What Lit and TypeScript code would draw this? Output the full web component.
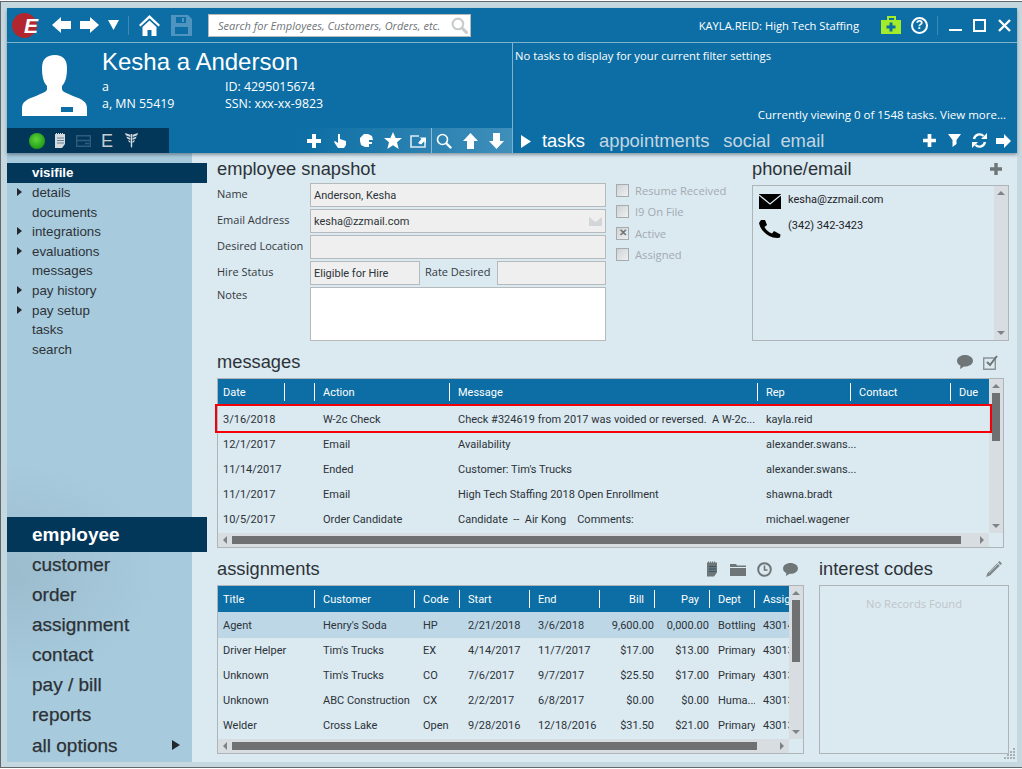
import { LitElement, html, css, svg } from "lit";
import { customElement } from "lit/decorators.js";

const W = "#ffffff";
const ico = (w: number, h: number, vb: string, body: unknown, cls = "") =>
  html`<svg class="ico ${cls}" width=${w} height=${h} viewBox=${vb}>${body}</svg>`;

const plus = (s = 14, c = W) => ico(s, s, "0 0 14 14", svg`<path fill=${c} d="M5 0h4v5h5v4H9v5H5V9H0V5h5z"/>`);
const back = ico(19, 18, "0 0 19 18", svg`<path fill=${W} d="M0 9l9-8v4h10v8H9v4z"/>`);
const fwd = ico(19, 18, "0 0 19 18", svg`<path fill=${W} d="M19 9l-9-8v4H0v8h10v4z"/>`);
const down = ico(11, 10, "0 0 11 10", svg`<path fill=${W} d="M0 0h11L5.5 10z"/>`);
const home = ico(21, 21, "0 0 21 21", svg`<path fill=${W} d="M10.5 0L21 10l-1.5 1.6-9-8.4-9 8.4L0 10zM10.5 5.5l7 6.5v9h-5v-6h-4v6h-5v-9z"/>`);
const save = ico(21, 21, "0 0 21 21", svg`<path fill="#4f94bf" fill-rule="evenodd" d="M0 0h17l4 4v17H0zM5 2v6h10V2zM4 12v7h13v-7z"/><path fill="#4f94bf" d="M11 3h2v4h-2z"/>`);
const magnify = (s: number, c: string, sw = 2) => ico(s, s, "0 0 16 16", svg`<circle cx="6.5" cy="6.5" r="5" fill="none" stroke=${c} stroke-width=${sw}/><path stroke=${c} stroke-width=${sw + 0.8} stroke-linecap="round" d="M10.5 10.5l4 4"/>`);
const kit = ico(20, 18, "0 0 20 18", svg`<path fill="#a4ec27" d="M0 4h6V0h9v4h5v14H0zM8 2v2h5V2z" fill-rule="evenodd"/><path fill="#0c6ea4" d="M8.5 6.5h3v3h3v3h-3v3h-3v-3h-3v-3h3z"/>`);
const help = html`<span class="help">?</span>`;
const minimize = ico(13, 14, "0 0 13 14", svg`<path fill=${W} d="M0 11h13v2H0z"/>`);
const maximize = ico(13, 13, "0 0 13 13", svg`<path fill="none" stroke=${W} stroke-width="2" d="M1 1h11v11H1z"/>`);
const closeX = ico(13, 13, "0 0 13 13", svg`<path stroke=${W} stroke-width="2.4" d="M1 1l11 11M12 1L1 12"/>`);
const avatar = ico(65, 61, "0 0 65 61", svg`<path fill=${W} d="M33 0C24 0 20 5 20 13C20 20 21 27 25 31L25 34C25 37 20 38 14 41C5 44 0 47 0 53L0 61L65 61L65 53C65 47 60 44 51 41C45 38 40 37 40 34L40 31C44 27 45 20 45 13C45 5 41 0 33 0Z"/><rect x="39" y="52" width="12" height="5" fill="#0c6ea4"/>`);
const dot = html`<span class="dot"></span>`;
const note = (c: string, w = 11, h = 15) => ico(w, h, "0 0 11 15", svg`<path fill=${c} d="M0 1h1V0h1v1h1V0h1v1h1V0h1v1h1V0h1v1h2v10l-3 4H0z"/><path stroke="#0b3f60" stroke-width="1" opacity=".55" d="M2 5h7M2 7.5h7M2 10h7"/>`);
const card = ico(15, 12, "0 0 15 12", svg`<path fill="none" stroke="#2f5d7c" stroke-width="1.4" d="M.7.7h13.6v10.6H.7z"/><path stroke="#2f5d7c" stroke-width="1.4" d="M1 5.5h13M9 8.5h4"/>`);
const caduceus = ico(13, 15, "0 0 13 15", svg`<path fill="#d5dadd" d="M0 0l5.300 1.800V4L.8 2.200zM13 0L7.700 1.800V4l4.500-1.800zM1.300 3.500L5.300 5v2L2.200 5.600zM11.700 3.500L7.700 5v2l3.100-1.400zM3 7l2.300 1v2L3.800 8.800zM10 7L7.700 8v2l1.500-1.200zM5.800 1h1.400v12.500L6.500 15l-.7-1.500z"/>`);
const hand = ico(12, 14, "0 0 12 14", svg`<path fill=${W} d="M4 0h2v5l6 2v4l-2 3H4L0 8l1-1 3 2z"/>`);
const puzzle = ico(13, 13, "0 0 13 13", svg`<path fill=${W} d="M4 0h4l4 2 1 4H9v2h3v2H9v3H5L1 11 0 7V4z"/>`);
const star = ico(18, 17, "0 0 18 17", svg`<path fill=${W} d="M9 0l2.600 6H18l-5 4.300L14.700 17 9 13.300 3.300 17 5 10.300 0 6h6.400z"/>`);
const exportI = ico(16, 14, "0 0 16 14", svg`<path fill="none" stroke=${W} stroke-width="1.600" opacity=".85" d="M9 2H1v11h14V8"/><path fill=${W} d="M8 9l3.500-4-2-1.500H16v5.500l-2-1.500-3 3z"/>`);
const up = ico(15, 16, "0 0 15 16", svg`<path fill=${W} d="M7.500 0L15 8h-4v8H4V8H0z"/>`);
const dn = ico(15, 16, "0 0 15 16", svg`<path fill=${W} d="M7.500 16L15 8h-4V0H4v8H0z"/>`);
const play = ico(10, 13, "0 0 10 13", svg`<path fill=${W} d="M0 0l10 6.500L0 13z"/>`);
const filter = ico(13, 13, "0 0 13 13", svg`<path fill=${W} d="M0 0h13L8.500 6v4l-4 3V6z"/>`);
const refresh = ico(15, 15, "0 0 15 15", svg`<path fill="none" stroke=${W} stroke-width="2.400" d="M2 6a5.700 5.700 0 0 1 9.500-3M13 9a5.700 5.700 0 0 1-9.500 3"/><path fill=${W} d="M15 0v6H9zM0 15V9h6z"/>`);
const arrowR = ico(15, 14, "0 0 15 14", svg`<path fill=${W} d="M15 7L8 0v4H0v6h8v4z"/>`);
const G = "#6e7678";
const chat = (w = 16, h = 14) => ico(w, h, "0 0 16 14", svg`<path fill=${G} d="M8 0c4.400 0 8 2.500 8 5.800s-3.600 5.800-8 5.800h-1L3 14l.5-3.200C1.300 9.800 0 8 0 5.800 0 2.500 3.600 0 8 0z"/>`);
const checkbox = ico(16, 15, "0 0 16 15", svg`<path fill="none" stroke="#8a9296" stroke-width="1.400" d="M.7 3h11.600v11.300H.7z"/><path fill="none" stroke=${G} stroke-width="2" d="M4 7l3 3 7-9"/>`);
const folder = ico(16, 13, "0 0 16 13", svg`<path fill=${G} d="M0 1h6l1 1.500h9V4H0zM0 5h16v8H0z"/>`);
const clock = ico(15, 15, "0 0 15 15", svg`<circle cx="7.500" cy="7.500" r="6.300" fill="none" stroke=${G} stroke-width="2"/><path fill="none" stroke=${G} stroke-width="1.600" d="M7.500 3.500v4.500h3"/>`);
const pencil = ico(16, 16, "0 0 16 16", svg`<path fill="#7f878a" d="M13.500 0L16 2.500l-1.500 1.500L12 1.500zM11.300 2.200l2.500 2.500-9.800 9.800L0 16l1.500-4z"/><path stroke="#dbe9f1" stroke-width=".7" d="M3 11.500l8.800-8.300"/>`);
const mail = ico(22, 15, "0 0 22 15", svg`<path d="M0 0h22v15H0z"/><path fill="none" stroke="#dbe9f1" stroke-width="1.300" d="M0 1l11 9 11-9"/>`);
const phone = ico(22, 18, "0 0 22 18", svg`<path d="M2 0L6 0 8 5 5.500 7C7 10 10 12.500 13 13.500L15 11 21.500 14.500 21 17.500C20 18 17 18 14 17.500 7 16 1 9 0 3z"/>`);
const envelope = ico(13, 9, "0 0 13 9", svg`<path fill="#d3d6d8" d="M0 0l6.500 5L13 0v9H0z"/>`);

const vbar = (top: number, h: number) => html`<div class="vbar">
  <span class="arr"><i class="tu"></i></span>
  ${h ? html`<span class="vthumb" style="margin-top:${top}px;height:${h}px"></span>` : ""}
  <span class="grow"></span>
  <span class="arr"><i class="td"></i></span>
</div>`;
const hbar = (w: number) => html`<div class="hbar">
  <span class="arr"><i class="tl"></i></span>
  <span class="hthumb" style="width:${w}px"></span>
  <span class="grow"></span>
  <span class="arr"><i class="tr"></i></span>
</div>`;

const MSG_COLS = "67px 30px 135px 308px 93px 100px 38px";
const ASG_COLS = "97px 100px 45px 70px 70px 55px 55px 45px 34px";
const msgHead = ["Date", "", "Action", "Message", "Rep", "Contact", "Due"];
const msgRows = [
  ["3/16/2018", "", "W-2c Check", "Check #324619 from 2017 was voided or reversed.  A W-2c...", "kayla.reid", "", ""],
  ["12/1/2017", "", "Email", "Availability", "alexander.swans...", "", ""],
  ["11/14/2017", "", "Ended", "Customer: Tim's Trucks", "alexander.swans...", "", ""],
  ["11/1/2017", "", "Email", "High Tech Staffing 2018 Open Enrollment", "shawna.bradt", "", ""],
  ["10/5/2017", "", "Order Candidate", "Candidate  --  Air Kong    Comments:", "michael.wagener", "", ""],
];
const asgHead = ["Title", "Customer", "Code", "Start", "End", "Bill", "Pay", "Dept", "Assign"];
const asgRows = [
  ["Agent", "Henry's Soda", "HP", "2/21/2018", "3/6/2018", "9,600.00", "0,000.00", "Bottling", "43014"],
  ["Driver Helper", "Tim's Trucks", "EX", "4/14/2017", "11/7/2017", "$17.00", "$13.00", "Primary", "43013"],
  ["Unknown", "Tim's Trucks", "CO", "7/6/2017", "9/7/2017", "$25.50", "$17.00", "Primary", "43013"],
  ["Unknown", "ABC Construction", "CX", "2/2/2017", "6/8/2017", "$0.00", "$0.00", "Huma...", "43013"],
  ["Welder", "Cross Lake", "Open", "9/28/2016", "12/18/2016", "$31.50", "$21.00", "Primary", "43013"],
];

@customElement("app-root")
export class AppRoot extends LitElement {
  static styles = css`
    :host {
      display: block; width: 1022px; height: 767px; box-sizing: border-box; overflow: hidden;
      background: #c5d8e0; border-top: 1px solid #62686c; border-left: 1px solid #62686c; border-bottom: 1px solid #62686c;
      padding: 6px 5px 5px 6px; margin-top: 1px;
      font-family: "Open Sans", "Noto Sans", sans-serif; font-size: 11px; color: #2c3338;
    }
    * { box-sizing: border-box; }
    .ico { display: block; flex: none; }
    .app { display: flex; flex-direction: column; height: 754px; }

    header { background: #0c6ea4; color: #fff; height: 145px; flex: none; display: flex; flex-direction: column; box-shadow: 0 2px 3px rgba(40,60,70,.45); position: relative; z-index: 2; }
    .topbar { height: 35px; flex: none; display: flex; align-items: center; padding: 0 6px 0 5px; border-bottom: 1px solid #7fb2cf; }
    .logo { width: 25px; height: 25px; border-radius: 50%; background: #b2272d; flex: none; margin-right: 15px; display: flex; align-items: center; justify-content: flex-end; overflow: visible; }
    .logo b { font: italic bold 21px/25px "Liberation Sans", sans-serif; color: #fff; margin-right: -1px; }
    .g9 { margin-right: 9px; }
    .sep { width: 1px; height: 19px; background: #3c8ab6; flex: none; }
    .mr10 { margin-right: 10px; } .mr11 { margin-right: 11px; } .mr12 { margin-right: 12px; } .mr16 { margin-right: 16px; }
    .mr22 { margin-right: 22px; } .mr9 { margin-right: 9px; }
    .search { width: 263px; height: 23px; background: #fff; border: 1px solid #b9b9b9; display: flex; align-items: center; justify-content: space-between; padding: 0 2px 0 9px; font-style: italic; color: #6f7478; font-size: 11px; white-space: nowrap; }
    .user { margin-left: auto; font-size: 11.2px; color: #fff; white-space: nowrap; }
    .help { width: 17px; height: 17px; flex: none; border: 2px solid #fff; border-radius: 50%; display: flex; align-items: center; justify-content: center; font: bold 12px/1 "Liberation Sans", sans-serif; color: #fff; }

    .panels { flex: 1; display: flex; min-height: 0; }
    .pl { width: 505px; flex: none; display: flex; flex-direction: column; }
    .pr { flex: 1; border-left: 1px solid #7fb2cf; display: flex; flex-direction: column; }
    .info { flex: 1; display: flex; padding: 12px 0 0 15px; }
    .info > .ico { margin-right: 15px; }
    .name { font: 24px/28px "Liberation Sans", sans-serif; color: #fff; margin-top: -7px; height: 30px; }
    .grid { display: grid; grid-template-columns: 123px auto; font-size: 12.4px; line-height: 17px; color: #fff; }
    .bar { height: 25px; flex: none; display: flex; justify-content: space-between; align-items: center; }
    .status { width: 162px; height: 25px; background: #03375a; display: flex; align-items: center; padding-left: 22px; gap: 10px; }
    .dot { width: 16px; height: 16px; border-radius: 50%; background: radial-gradient(circle at 45% 40%, #5ed43a, #1f9a16 75%); flex: none; }
    .e { font: 18px/1 "Liberation Sans", sans-serif; color: #c5cdd2; margin: 0 2px 0 0; }
    .actions { width: 212px; height: 25px; display: flex; align-items: center; padding-left: 7px; background: linear-gradient(90deg, #0c6ea4, #3f8fba); }
    .sepw { width: 1px; height: 25px; background: #8dbbd4; flex: none; }
    .mr13 { margin-right: 13px; } .mr14 { margin-right: 14px; } .mr8 { margin-right: 8px; } .mr5 { margin-right: 5px; } .mr4 { margin-right: 4px; }

    .notask { padding: 5px 0 0 2px; font-size: 11.25px; line-height: 16px; color: #fff; flex: 1; white-space: nowrap; }
    .viewing { text-align: right; padding-right: 11px; font-size: 11.5px; line-height: 16px; color: #fff; white-space: nowrap; margin-bottom: 5px; }
    .tabs { height: 25px; flex: none; display: flex; align-items: center; padding: 1px 6px 0 8px; }
    .tabs > .ico:first-child { margin-right: 11px; }
    .tab { font: 18.4px/24px "Liberation Sans", sans-serif; color: #c3d6e2; margin-right: 14px; }
    .tab.on { color: #fff; }
    .tab.tight { margin-right: 10px; }
    .tools { margin-left: auto; display: flex; align-items: center; margin-top: -1px; }

    .body { flex: 1; display: flex; min-height: 0; background: #dbe9f1; }
    nav { width: 185px; flex: none; background: radial-gradient(ellipse 150px 110px at 0 420px, #9abccd, transparent), #a8cadd; display: flex; flex-direction: column; justify-content: space-between; padding: 10px 0 0; position: relative; z-index: 1; font-family: "Liberation Sans", sans-serif; }
    .sub { display: flex; flex-direction: column; }
    .si { width: 200px; height: 19.6px; line-height: 19.6px; padding-left: 25px; font-size: 13.33px; color: #2c3338; display: flex; align-items: center; position: relative; }
    .si.on { background: #03375a; color: #fff; font-weight: bold; height: 20px; }
    .si.car::before { content: ""; position: absolute; left: 10px; top: 5px; border-left: 5px solid #23282c; border-top: 4px solid transparent; border-bottom: 4px solid transparent; }
    .mods { display: flex; flex-direction: column; }
    .mi { width: 185px; height: 30px; line-height: 25px; padding: 0 12px 5px 25px; font-size: 19px; color: #2c3135; -webkit-text-stroke: .25px #2c3135; display: flex; justify-content: space-between; align-items: center; }
    .mi.on { width: 200px; height: 35px; padding-bottom: 0; background: #03375a; color: #fff; font-weight: bold; -webkit-text-stroke: 0; }
    .mi .t { width: 0; height: 0; border-left: 8px solid #23282c; border-top: 5px solid transparent; border-bottom: 5px solid transparent; }
    .mods .mi:last-child { padding-bottom: 4px; }

    main { flex: 1; min-width: 0; padding: 0 8px 0 25px; display: flex; flex-direction: column; }
    h2 { margin: 0; font: 18.3px/20px "Liberation Sans", sans-serif; color: #2c3338; white-space: nowrap; }
    .s1 { height: 199px; flex: none; display: flex; padding-top: 6px; }
    .snap { width: 389px; flex: none; margin-right: 10px; }
    .form { display: grid; grid-template-columns: 93px 296px; grid-auto-rows: 24px; row-gap: 2px; margin-top: 4px; }
    .lab { align-self: center; color: #33393d; white-space: nowrap; line-height: 16px; margin-top: -2px; }
    .f { background: #efefef; border: 1px solid #b6babd; padding: 0 3px; display: flex; align-items: center; justify-content: space-between; color: #2c3338; font-family: Roboto, sans-serif; font-size: 11px; }
    .hire { display: flex; }
    .hire .f:first-child { width: 110px; }
    .hire .lab { width: 77px; padding-left: 5px; align-self: center; }
    .hire .f:last-child { width: 109px; }
    .noteslab { align-self: start; margin-top: 0; }
    .notes { height: 54px; background: #fff; border: 1px solid #b6babd; }
    .checks { width: 126px; flex: none; margin-right: 10px; padding-top: 21px; }
    .ck { height: 21.3px; display: flex; align-items: center; gap: 6px; color: #a3abb0; white-space: nowrap; font-size: 11.2px; }
    .box { width: 13px; height: 13px; flex: none; border: 1px solid #a6abae; background: linear-gradient(135deg, #cfd3d6, #eef0f1); display: flex; align-items: center; justify-content: center; color: #6c7276; font: bold 10px/1 "Liberation Sans", sans-serif; }
    .pe { width: 257px; flex: none; }
    .hd { display: flex; align-items: center; justify-content: space-between; height: 20px; }
    .hd.pr7 { padding-right: 7px; }
    .pebox { margin-top: 6px; height: 156px; border: 1px solid #aeb4b8; display: flex; }
    .pelist { flex: 1; padding: 8px 0 0 6px; color: #1c2226; font-family: Roboto, sans-serif; }
    .peitem { display: flex; align-items: flex-start; gap: 7px; height: 24px; }
    .peitem span { line-height: 11px; }
    .peitem + .peitem { margin-top: 2px; }
    .s2 { width: 787px; flex: none; }
    .iconsr { display: flex; align-items: center; gap: 10px; padding-right: 5px; }
    .tbl { display: grid; grid-template-columns: 1fr 14px; grid-template-rows: 1fr 14px; border: 1px solid #aeb4b8; margin-top: 6px; height: 170px; position: relative; font-family: Roboto, sans-serif; }
    .tbl .data { min-width: 0; overflow: hidden; }
    .row { display: grid; height: 25px; align-items: center; white-space: pre; }
    .head { background: #0c6ea4; color: #fff; }
    .head .c { height: 18px; line-height: 20px; border-right: 1px solid #fff; margin-top: 0; }
    .head .c:last-child { border-right: 0; }
    .c { padding-left: 5px; overflow: hidden; white-space: pre; min-width: 0; margin-top: 2px; }
    .m .c { overflow: visible; }
    .m .c:nth-child(n+3) { padding-left: 8px; }
    .a .c:nth-child(n+2) { padding-left: 8px; }
    .a .c:nth-child(6), .a .c:nth-child(7) { text-align: right; padding: 0 1px 0 0; }
    .a .head .c:nth-child(6), .a .head .c:nth-child(7) { padding-right: 10px; }
    .m .rows { padding-top: 2px; }
    .a .rows .row { padding-bottom: 2px; }
    .sel { position: absolute; left: -3px; top: 25px; width: 777px; height: 29px; border: 2px solid #f40009; z-index: 3; pointer-events: none; }
    .vbar { background: #d8dde1; display: flex; flex-direction: column; align-items: center; }
    .hbar { background: #d8dde1; display: flex; align-items: center; }
    .arr { width: 14px; height: 14px; flex: none; display: flex; align-items: center; justify-content: center; }
    .grow { flex: 1; }
    .vthumb { width: 8px; background: #6e7072; flex: none; }
    .hthumb { height: 8px; background: #6e7072; flex: none; }
    i { display: block; width: 0; height: 0; }
    .tu { border-bottom: 4px solid #7d8488; border-left: 4px solid transparent; border-right: 4px solid transparent; }
    .td { border-top: 4px solid #7d8488; border-left: 4px solid transparent; border-right: 4px solid transparent; }
    .tl { border-right: 4px solid #7d8488; border-top: 4px solid transparent; border-bottom: 4px solid transparent; }
    .tr { border-left: 4px solid #7d8488; border-top: 4px solid transparent; border-bottom: 4px solid transparent; }
    .s3 { display: flex; gap: 15px; margin-top: 11px; }
    .asg { width: 587px; flex: none; }
    .asg .tbl { height: 169px; }
    .asg .head { height: 26px; }
    .asg .rows .row:first-child { height: 26px; background: #bdd7e7; }
    .int { width: 190px; flex: none; position: relative; }
    .intbox { margin-top: 6px; height: 169px; border: 1px solid #aeb4b8; text-align: center; padding-top: 10px; color: #bfc5c9; font-size: 11.2px; line-height: 16px; }
    .iconsa { display: flex; align-items: center; gap: 11px; padding-right: 6px; }
    .iconsa .ico:first-child { margin-right: 1px; }
    .grip { position: absolute; right: -7px; bottom: -6px; }
  `;

  render() {
    return html`<div class="app">
      <header>
        <div class="topbar">
          <span class="logo"><b>E</b></span>
          <span class="g9">${back}</span><span class="g9">${fwd}</span><span class="g9">${down}</span>
          <span class="sep mr10"></span>
          <span class="mr11">${home}</span><span class="mr16">${save}</span>
          <div class="search"><span>Search for Employees, Customers, Orders, etc.</span>${magnify(17, "#c9cbcd")}</div>
          <span class="user mr22">KAYLA.REID: High Tech Staffing</span>
          <span class="mr10">${kit}</span><span class="mr9">${help}</span>
          <span class="sep mr11"></span>
          <span class="mr11">${minimize}</span><span class="mr12">${maximize}</span>${closeX}
        </div>
        <div class="panels">
          <div class="pl">
            <div class="info">
              ${avatar}
              <div>
                <div class="name">Kesha a Anderson</div>
                <div class="grid">
                  <span>a</span><span>ID: 4295015674</span>
                  <span>a, MN 55419</span><span>SSN: xxx-xx-9823</span>
                </div>
              </div>
            </div>
            <div class="bar">
              <div class="status">${dot}${note("#d5dadd")}${card}<span class="e">E</span>${caduceus}</div>
              <div class="actions">
                <span class="mr13">${plus()}</span><span class="mr14">${hand}</span><span class="mr11">${puzzle}</span>
                <span class="mr8">${star}</span><span class="mr5">${exportI}</span><span class="sepw mr4"></span>
                <span class="mr11">${magnify(16, "#fff", 1.6)}</span><span class="mr11">${up}</span>${dn}
              </div>
            </div>
          </div>
          <div class="pr">
            <div class="notask">No tasks to display for your current filter settings</div>
            <div class="viewing">Currently viewing 0 of 1548 tasks. View more...</div>
            <div class="tabs">
              ${play}
              <span class="tab on">tasks</span><span class="tab">appointments</span><span class="tab tight">social</span><span class="tab">email</span>
              <div class="tools">
                <span class="mr12">${plus(13)}</span><span class="mr11">${filter}</span><span class="mr9">${refresh}</span>${arrowR}
              </div>
            </div>
          </div>
        </div>
      </header>
      <div class="body">
        <nav>
          <div class="sub">
            <div class="si on">visifile</div>
            ${[["details", 1], ["documents", 0], ["integrations", 1], ["evaluations", 1], ["messages", 0], ["pay history", 1], ["pay setup", 1], ["tasks", 0], ["search", 0]].map(
              ([t, c]) => html`<div class="si ${c ? "car" : ""}">${t}</div>`
            )}
          </div>
          <div class="mods">
            <div class="mi on">employee</div>
            ${["customer", "order", "assignment", "contact", "pay / bill", "reports"].map((t) => html`<div class="mi">${t}</div>`)}
            <div class="mi">all options<span class="t"></span></div>
          </div>
        </nav>
        <main>
          <section class="s1">
            <div class="snap">
              <h2>employee snapshot</h2>
              <div class="form">
                <span class="lab">Name</span><div class="f">Anderson, Kesha</div>
                <span class="lab">Email Address</span><div class="f">kesha@zzmail.com ${envelope}</div>
                <span class="lab">Desired Location</span><div class="f"></div>
                <span class="lab">Hire Status</span>
                <div class="hire"><div class="f">Eligible for Hire</div><span class="lab">Rate Desired</span><div class="f"></div></div>
                <span class="lab noteslab">Notes</span><div class="notes"></div>
              </div>
            </div>
            <div class="checks">
              <div class="ck"><span class="box"></span>Resume Received</div>
              <div class="ck"><span class="box"></span>I9 On File</div>
              <div class="ck"><span class="box">✕</span>Active</div>
              <div class="ck"><span class="box"></span>Assigned</div>
            </div>
            <div class="pe">
              <div class="hd pr7"><h2>phone/email</h2>${plus(12, G)}</div>
              <div class="pebox">
                <div class="pelist">
                  <div class="peitem">${mail}<span>kesha@zzmail.com</span></div>
                  <div class="peitem">${phone}<span>(342) 342-3423</span></div>
                </div>
                ${vbar(0, 0)}
              </div>
            </div>
          </section>
          <section class="s2">
            <div class="hd"><h2>messages</h2><div class="iconsr">${chat()}${checkbox}</div></div>
            <div class="tbl m">
              <div class="data">
                <div class="row head" style="grid-template-columns:${MSG_COLS}">${msgHead.map((h) => html`<span class="c">${h}</span>`)}</div>
                <div class="rows">
                  ${msgRows.map((r) => html`<div class="row" style="grid-template-columns:${MSG_COLS}">${r.map((v) => html`<span class="c">${v}</span>`)}</div>`)}
                </div>
              </div>
              ${vbar(0, 48)}
              ${hbar(729)}
              <span></span>
              <div class="sel"></div>
            </div>
          </section>
          <section class="s3">
            <div class="asg">
              <div class="hd"><h2>assignments</h2><div class="iconsa">${note(G, 11, 16)}${folder}${clock}${chat(15, 13)}</div></div>
              <div class="tbl a">
                <div class="data">
                  <div class="row head" style="grid-template-columns:${ASG_COLS}">${asgHead.map((h) => html`<span class="c">${h}</span>`)}</div>
                  <div class="rows">
                    ${asgRows.map((r) => html`<div class="row" style="grid-template-columns:${ASG_COLS}">${r.map((v) => html`<span class="c">${v}</span>`)}</div>`)}
                  </div>
                </div>
                ${vbar(0, 62)}
                ${hbar(525)}
                <span></span>
              </div>
            </div>
            <div class="int">
              <div class="hd pr7"><h2>interest codes</h2>${pencil}</div>
              <div class="intbox">No Records Found</div>
              <svg class="grip" width="12" height="12" viewBox="0 0 12 12" fill="#a9b1b5">
                <rect x="9" y="0" width="2" height="2"/><rect x="6" y="3" width="2" height="2"/><rect x="9" y="3" width="2" height="2"/>
                <rect x="3" y="6" width="2" height="2"/><rect x="6" y="6" width="2" height="2"/><rect x="9" y="6" width="2" height="2"/>
                <rect x="0" y="9" width="2" height="2"/><rect x="3" y="9" width="2" height="2"/><rect x="6" y="9" width="2" height="2"/><rect x="9" y="9" width="2" height="2"/>
              </svg>
            </div>
          </section>
        </main>
      </div>
    </div>`;
  }
}
